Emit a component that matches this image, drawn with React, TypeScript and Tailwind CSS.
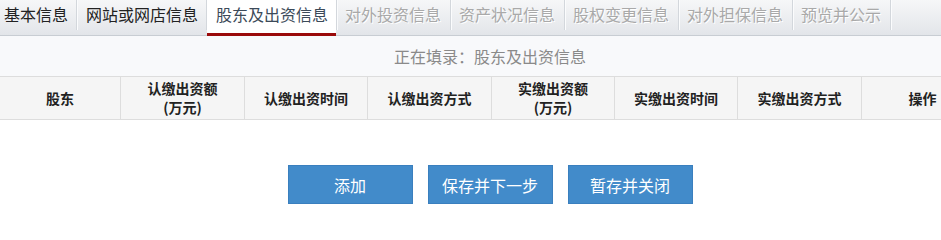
import React from "react";

const font = { fontFamily: '"Noto Sans CJK SC", "Noto Sans", sans-serif' };

type Tab = { label: string; state: "normal" | "active" | "disabled"; cls: string };

const tabs: Tab[] = [
  { label: "基本信息", state: "normal", cls: "pl-1 pr-2" },
  { label: "网站或网店信息", state: "normal", cls: "pl-[9px] pr-2" },
  { label: "股东及出资信息", state: "active", cls: "pl-[9px] pr-2" },
  { label: "对外投资信息", state: "disabled", cls: "pl-[8px] pr-[9px]" },
  { label: "资产状况信息", state: "disabled", cls: "pl-[8px] pr-[9px]" },
  { label: "股权变更信息", state: "disabled", cls: "pl-[8px] pr-[9px]" },
  { label: "对外担保信息", state: "disabled", cls: "pl-[8px] pr-[9px]" },
  { label: "预览并公示", state: "disabled", cls: "pl-[8px] pr-[9px]" },
];

const cols: { w: string; lines: string[] }[] = [
  { w: "w-[120px]", lines: ["股东"] },
  { w: "w-[124px]", lines: ["认缴出资额", "(万元)"] },
  { w: "w-[123px]", lines: ["认缴出资时间"] },
  { w: "w-[124px]", lines: ["认缴出资方式"] },
  { w: "w-[123px]", lines: ["实缴出资额", "(万元)"] },
  { w: "w-[123px]", lines: ["实缴出资时间"] },
  { w: "w-[124px]", lines: ["实缴出资方式"] },
  { w: "w-[122px]", lines: ["操作"] },
];

function Sep() {
  return (
    <span className="w-px h-full shrink-0 flex flex-col">
      <span className="h-[30px] bg-[#d3d7dc] shadow-[1px_0_0_#fbfcfd]" />
      <span className="flex-1 border-b border-[#c8cdd3]" />
    </span>
  );
}

export default function App() {
  return (
    <div className="w-[941px] h-[228px] overflow-hidden bg-white" style={font}>
      <div className="flex h-[36px] bg-gradient-to-b from-[#f6f7f8] to-[#e2e5e9]">
        {tabs.map((t, i) => (
          <React.Fragment key={t.label}>
            {i > 0 && <Sep />}
            <div
              className={
                "shrink-0 h-full text-[16px] leading-[28px] whitespace-nowrap " +
                t.cls +
                (t.state === "active"
                  ? " bg-white border-b-[3px] border-[#9a0a0a] text-[#3c4a59]"
                  : t.state === "normal"
                  ? " border-b border-[#c8cdd3] text-[#222222]"
                  : " border-b border-[#c8cdd3] text-[#a9a9a9] [text-shadow:1px_1px_0_#ffffff]")
              }
            >
              {t.label}
            </div>
          </React.Fragment>
        ))}
        <Sep />
        <div className="flex-1 h-full border-b border-[#c8cdd3]" />
      </div>

      <div className="w-[983px]">
        <div className="w-[980px] h-[40px] bg-[#f8f9fb] flex items-center justify-center text-[16px] text-[#8a8a8a]">
          正在填录：股东及出资信息
        </div>
        <div className="flex border-y border-[#dddddd] bg-[#f5f5f5]">
          {cols.map((c, i) => (
            <div
              key={i}
              className={
                c.w +
                " shrink-0 h-[42px] flex flex-col items-center justify-center text-[14px] leading-[19px] font-bold text-[#222222]" +
                (i > 0 ? " border-l border-[#dddddd]" : "")
              }
            >
              {c.lines.map((l) => (
                <span key={l}>{l}</span>
              ))}
            </div>
          ))}
        </div>
        <div className="w-[980px] flex justify-center gap-[15px] pt-[45px]">
          {["添加", "保存并下一步", "暂存并关闭"].map((b) => (
            <button
              key={b}
              className="w-[125px] h-[39px] bg-[#428bca] border border-[#3a7fbe] text-white text-[16px]"
              style={font}
            >
              {b}
            </button>
          ))}
        </div>
      </div>
    </div>
  );
}
